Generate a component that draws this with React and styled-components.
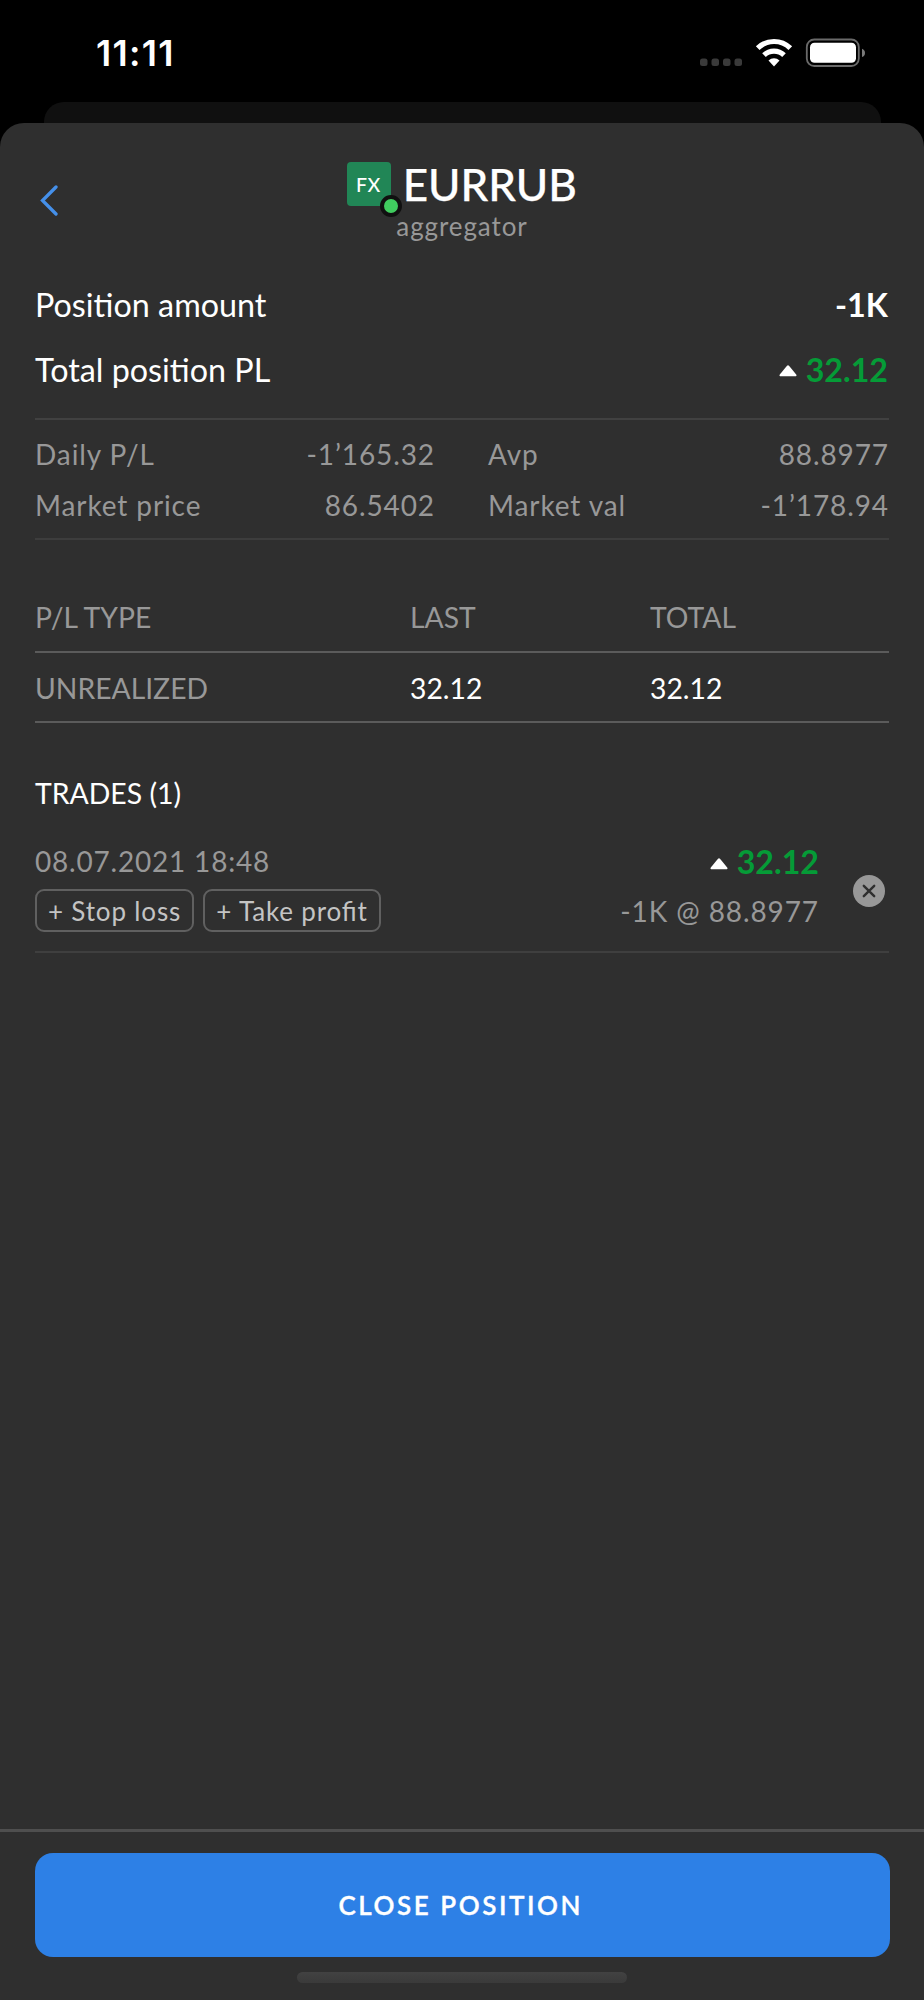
import React from 'react';
import styled, { createGlobalStyle } from 'styled-components';

const GlobalStyle = createGlobalStyle`
  *, *::before, *::after { box-sizing: border-box; }
  html, body { margin: 0; background: #000; }
  body {
    font-family: Lato, "Liberation Sans", sans-serif;
    font-feature-settings: "liga" 1, "kern" 1;
    color: #fff;
  }
`;

const Screen = styled.div`
  width: 924px;
  height: 2000px;
  display: flex;
  flex-direction: column;
  overflow: hidden;
  background: #000;
`;

const StatusBar = styled.header`
  height: 102px;
  padding: 0 59px 0 96px;
  display: flex;
  align-items: center;
  justify-content: space-between;
`;

const Clock = styled.time`
  font: 600 36px/40px Inter, sans-serif;
  letter-spacing: 1.3px;
  padding-top: 3px;
`;

const StatusIcons = styled.svg`
  width: 168px;
  height: 30px;
  margin-top: 3px;
`;

const BackSheet = styled.div`
  height: 21px;
  margin: 0 43.5px;
  background: #101010;
  border-radius: 20px 20px 0 0;
`;

const Sheet = styled.main`
  flex: 1;
  display: flex;
  flex-direction: column;
  background: #2f2f2f;
  border-radius: 24px 24px 0 0;
`;

const Header = styled.div`
  height: 149px;
  padding: 0 35px;
  display: grid;
  grid-template-columns: 60px 1fr 60px;
`;

const BackButton = styled.button`
  height: 31px;
  margin-top: 62px;
  padding: 0 0 0 4px;
  border: 0;
  background: none;
  text-align: left;

  svg { display: block; }
`;

const TitleBlock = styled.div`
  padding-top: 35px;
  display: flex;
  flex-direction: column;
  align-items: center;
`;

const TitleRow = styled.div`
  height: 52px;
  display: flex;
  align-items: center;
  gap: 12px;
`;

const Badge = styled.div`
  position: relative;
  width: 43.5px;
  height: 43.5px;
  padding-right: 1px;
  border-radius: 4px;
  background: #218656;
  font-size: 19.5px;
  font-weight: 500;
  line-height: 46px;
  letter-spacing: 0.6px;
  text-align: center;
`;

const OnlineDot = styled.span`
  position: absolute;
  right: -11px;
  bottom: -11px;
  width: 22px;
  height: 22px;
  border: 4.5px solid #101010;
  border-radius: 50%;
  background: #40cc5f;
`;

const Symbol = styled.h1`
  margin: 0;
  font-size: 44px;
  font-weight: 500;
  line-height: 54px;
  -webkit-text-stroke: 0.25px #fff;
`;

const Source = styled.div`
  font-size: 26px;
  line-height: 32px;
  letter-spacing: 0.9px;
  color: #989898;
`;

const Summary = styled.section`
  height: 148px;
  margin: 0 35px;
  padding: 0 1px 0 0;
  border-bottom: 2px solid #414141;
`;

const SummaryRow = styled.div`
  height: 64.5px;
  display: flex;
  justify-content: space-between;
  font-size: 32.3px;
  line-height: 65px;
`;

const Amount = styled.strong`
  font-weight: 700;
`;

const Profit = styled.strong`
  display: flex;
  align-items: center;
  gap: 8.5px;
  padding-top: ${(p) => p.$shift || 0}px;
  font-size: 32.2px;
  font-weight: 700;
  color: #059b37;

  svg { margin-top: 3px; }
`;

const Details = styled.dl`
  height: 120px;
  margin: 0 35px;
  padding: 8.5px 0 6.5px;
  display: grid;
  grid-template-columns: 400px 401px;
  justify-content: space-between;
  border-bottom: 2px solid #3d3d3d;
`;

const Detail = styled.div`
  height: 51.5px;
  display: flex;
  justify-content: space-between;
  font-size: 28px;
  line-height: 51.5px;
  letter-spacing: 0.9px;
  color: #989898;

  dd { margin: 0; }
`;

const Table = styled.div`
  margin: 42px 35px 0;
  font-size: 28.3px;
`;

const TableRow = styled.div`
  height: 70.5px;
  display: grid;
  grid-template-columns: 375px 240px 1fr;
  line-height: 71px;
  border-bottom: 2px solid #5b5b5b;
`;

const Cell = styled.span`
  color: ${(p) => (p.$bright ? '#fff' : '#989898')};
`;

const Trades = styled.section`
  margin: 44px 35px 0;
`;

const TradesTitle = styled.h2`
  margin: 0;
  height: 69px;
  font-size: 28.4px;
  font-weight: 400;
  line-height: 53px;
`;

const Trade = styled.article`
  height: 117px;
  display: flex;
  border-bottom: 2px solid #3f3f3f;
`;

const TradeInfo = styled.div`
  flex: 1;
`;

const TradeResult = styled.div`
  display: flex;
  flex-direction: column;
  align-items: flex-end;
`;

const Opened = styled.div`
  height: 53px;
  font-size: 28px;
  line-height: 51px;
  letter-spacing: 0.8px;
  color: #989898;
`;

const TradeProfit = styled.div`
  height: 53px;
  line-height: 50px;
`;

const Price = styled.div`
  font-size: 28px;
  line-height: 44px;
  letter-spacing: 0.9px;
  color: #989898;
`;

const Orders = styled.div`
  display: flex;
  gap: 9px;
`;

const OrderButton = styled.button`
  width: ${(p) => p.$width}px;
  height: 43px;
  padding: 0;
  border: 2px solid #606060;
  border-radius: 9px;
  background: none;
  color: #c4c4c4;
  font: inherit;
  font-feature-settings: inherit;
  font-size: 26px;
  line-height: 40px;
  letter-spacing: 0.85px;
  white-space: nowrap;
`;

const RemoveButton = styled.button`
  width: 32px;
  height: 32px;
  margin: 39px 4.5px 0 33.5px;
  padding: 0;
  border: 0;
  background: none;

  svg { display: block; }
`;

const Footer = styled.footer`
  height: 171px;
  margin-top: auto;
  padding: 21px 34.5px 0 35px;
  border-top: 3px solid #4f4f4f;
  display: flex;
  flex-direction: column;
  align-items: center;
  gap: 15px;
`;

const CloseButton = styled.button`
  width: 100%;
  height: 104px;
  padding: 0 3px 1px 0;
  border: 0;
  border-radius: 18px;
  background: #2d80e6;
  color: #fff;
  font: inherit;
  font-size: 26px;
  font-weight: 600;
  letter-spacing: 2.55px;
  -webkit-text-stroke: 0.35px #fff;
`;

const HomeIndicator = styled.div`
  width: 330px;
  height: 11px;
  border-radius: 6px;
  background: linear-gradient(#424242, #3a3a3a);
`;

const ArrowUp = () => (
  <svg width="18" height="12" viewBox="0 0 18 12">
    <path d="M8 .8a1.500 1.500 0 0 1 2 0l7.200 8.600c.7.9.2 1.900-.8 1.900H1.600C.6 11.300.1 10.300.8 9.400z" fill="#fff" />
  </svg>
);

const details = [
  ['Daily P/L', '-1’165.32'],
  ['Avp', '88.8977'],
  ['Market price', '86.5402'],
  ['Market val', '-1’178.94'],
];

export default function App() {
  return (
    <>
      <GlobalStyle />
      <Screen>
        <StatusBar>
          <Clock>11:11</Clock>
          <StatusIcons viewBox="0 0 168 30">
            <g fill="#3a3a3a">
              <rect x="3" y="20.500" width="7.500" height="7.500" rx="2.500" />
              <rect x="14.500" y="20.500" width="7.500" height="7.500" rx="2.500" />
              <rect x="26" y="20.500" width="7.500" height="7.500" rx="2.500" />
              <rect x="37.500" y="20.500" width="7.500" height="7.500" rx="2.500" />
            </g>
            <g fill="none" stroke="#fff" strokeWidth="5.200">
              <path d="M60.700 10.200a23.200 23.200 0 0 1 32.600 0" />
              <path d="M67 17.200a14.500 14.500 0 0 1 20 0" />
            </g>
            <path d="M71.500 22.500a8 8 0 0 1 11 0L77 28.600z" fill="#fff" />
            <rect x="109.800" y="1.500" width="52" height="26.500" rx="7.500" fill="none" stroke="#6a6a6a" strokeWidth="1.800" />
            <rect x="113" y="4.700" width="46" height="20" rx="4.500" fill="#fff" />
            <path d="M165 10.700q3 1.200 3 4.200t-3 4.200z" fill="#7a7a7a" />
          </StatusIcons>
        </StatusBar>
        <BackSheet />
        <Sheet>
          <Header>
            <BackButton aria-label="Back">
              <svg width="20" height="31" viewBox="0 0 20 31">
                <path d="M17 2 3.500 15.500 17 29" fill="none" stroke="#4590ea" strokeWidth="3.300" strokeLinecap="round" />
              </svg>
            </BackButton>
            <TitleBlock>
              <TitleRow>
                <Badge>
                  FX
                  <OnlineDot />
                </Badge>
                <Symbol>EURRUB</Symbol>
              </TitleRow>
              <Source>aggregator</Source>
            </TitleBlock>
          </Header>
          <Summary>
            <SummaryRow>
              <span>Position amount</span>
              <Amount>-1K</Amount>
            </SummaryRow>
            <SummaryRow>
              <span>Total position PL</span>
              <Profit $shift={1}>
                <ArrowUp />
                32.12
              </Profit>
            </SummaryRow>
          </Summary>
          <Details>
            {details.map(([label, value]) => (
              <Detail key={label}>
                <dt>{label}</dt>
                <dd>{value}</dd>
              </Detail>
            ))}
          </Details>
          <Table>
            <TableRow>
              <Cell>P/L TYPE</Cell>
              <Cell>LAST</Cell>
              <Cell>TOTAL</Cell>
            </TableRow>
            <TableRow>
              <Cell>UNREALIZED</Cell>
              <Cell $bright>32.12</Cell>
              <Cell $bright>32.12</Cell>
            </TableRow>
          </Table>
          <Trades>
            <TradesTitle>TRADES (1)</TradesTitle>
            <Trade>
              <TradeInfo>
                <Opened>08.07.2021 18:48</Opened>
                <Orders>
                  <OrderButton $width={159}>+ Stop loss</OrderButton>
                  <OrderButton $width={178}>+ Take profit</OrderButton>
                </Orders>
              </TradeInfo>
              <TradeResult>
                <TradeProfit>
                  <Profit $shift={1}>
                    <ArrowUp />
                    32.12
                  </Profit>
                </TradeProfit>
                <Price>-1K @ 88.8977</Price>
              </TradeResult>
              <RemoveButton aria-label="Close trade">
                <svg width="32" height="32" viewBox="0 0 32 32">
                  <circle cx="16" cy="16" r="16" fill="#989898" />
                  <path d="M10.800 10.800 21.200 21.200M21.200 10.800 10.800 21.200" stroke="#2f2f2f" strokeWidth="2.400" strokeLinecap="round" />
                </svg>
              </RemoveButton>
            </Trade>
          </Trades>
          <Footer>
            <CloseButton>CLOSE POSITION</CloseButton>
            <HomeIndicator />
          </Footer>
        </Sheet>
      </Screen>
    </>
  );
}
